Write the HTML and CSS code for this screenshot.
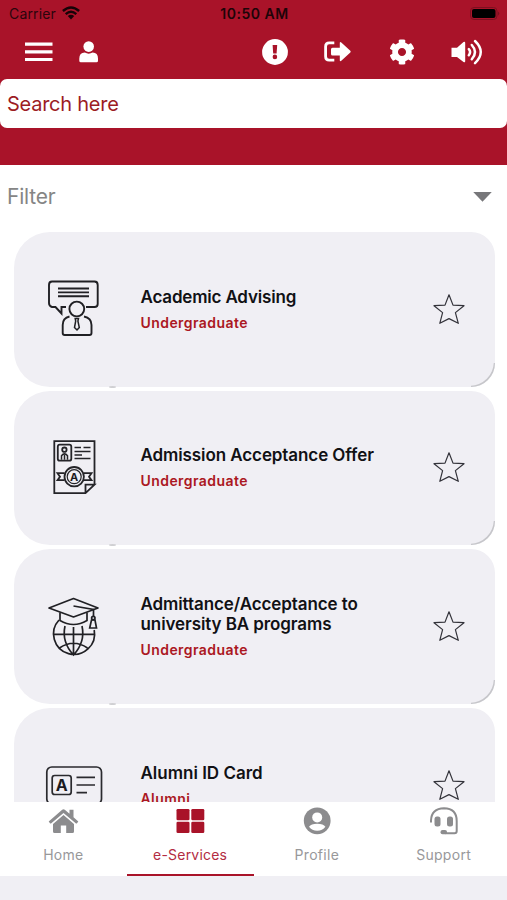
FILE: index.html
```html
<!DOCTYPE html>
<html lang="en">
<head>
<meta charset="utf-8">
<title>e-Services</title>
<link rel="stylesheet" href="styles.css">
</head>
<body>
<svg class="defs" width="0" height="0" aria-hidden="true">
  <symbol id="star" viewBox="0 0 32 32"><path d="M16 1.800 20 12.100 31 12.700 22.400 19.600 25.300 30.300 16 25.600 6.800 30.300 9.600 19.600 1 12.700 12 12.100Z" fill="none" stroke="#33333a" stroke-width="1.200" stroke-linejoin="round"/></symbol>
</svg>
<div class="screen">
  <header class="header">
    <div class="status">
      <div class="carrier"><span>Carrier</span>
        <svg width="18" height="14" viewBox="0 0 18 14" fill="none" stroke="#160307" stroke-width="2.400"><path d="M.9 5Q9-2.200 17.100 5M3.700 8.100Q9 3.500 14.300 8.100"/><path d="M5.800 10.100Q9 7.400 12.200 10.100L9 13.500Z" fill="#160307" stroke="none"/></svg>
      </div>
      <span class="time">10:50 AM</span>
      <svg class="battery" width="30" height="14" viewBox="0 0 30 14"><rect x=".5" y=".5" width="26.500" height="12" rx="3.500" fill="none" stroke="#7d1020"/><rect x="2" y="2" width="23.500" height="9" rx="2" fill="#000"/><path d="M28 4.500Q30.500 6.500 28 8.800Z" fill="#7d1020"/></svg>
    </div>
    <nav class="toolbar">
      <svg class="menu" width="28" height="20" viewBox="0 0 28 20" fill="#fff"><path d="M0 .5h27.500v3.200H0zM0 8.200h27.500v3.200H0zM0 15.900h27.500v3.200H0z"/></svg>
      <svg class="user" width="20" height="22" viewBox="0 0 20 22" fill="#fff"><circle cx="9.700" cy="5.600" r="5.300"/><path d="M.3 19.800V17.500Q.3 11.500 5.800 11.500Q9.700 13.800 13.600 11.500Q19 11.500 19 17.500V19.800Q19 21.300 17.500 21.300H1.800Q.3 21.300.3 19.800Z"/></svg>
      <svg class="alert" width="26" height="26" viewBox="0 0 26 26"><circle cx="13" cy="13" r="12.900" fill="#fff"/><path d="M10.600 6h4.600l-.6 8.600h-3.400Z" fill="#a91329"/><circle cx="12.900" cy="17.900" r="2.300" fill="#a91329"/></svg>
      <svg class="exit" width="28" height="22" viewBox="0 0 28 22"><path d="M10.300 1.900H5.200Q1.600 1.900 1.600 5.500V15.500Q1.600 19.200 5.200 19.200H10.300" fill="none" stroke="#fff" stroke-width="2.800"/><path d="M8.500 6.800H15.800V2Q15.800.2 17.300 1.600L26.300 9.800Q27.200 10.700 26.300 11.500L17.300 19.800Q15.800 21 15.800 19.200V14.400H8.500Q7 14.400 7 12.900V8.300Q7 6.800 8.500 6.800Z" fill="#fff"/></svg>
      <svg class="gear" width="26" height="26" viewBox="0 0 512 512"><path fill="#fff" fill-rule="evenodd" d="M487.400 315.700l-42.600-24.600c4.300-23.200 4.300-47 0-70.200l42.600-24.600c4.900-2.800 7.100-8.600 5.500-14-11.100-35.600-30-67.800-54.700-94.600-3.800-4.100-10-5.100-14.800-2.300L380.800 110c-17.900-15.400-38.500-27.300-60.800-35.100V25.800c0-5.600-3.900-10.500-9.400-11.700-36.700-8.200-74.300-7.800-109.200 0-5.500 1.200-9.400 6.100-9.400 11.700V75c-22.200 7.900-42.800 19.800-60.800 35.100L88.700 85.500c-4.900-2.800-11-1.900-14.800 2.300-24.700 26.700-43.600 58.900-54.700 94.600-1.700 5.400.6 11.200 5.500 14L67.300 221c-4.300 23.200-4.300 47 0 70.200l-42.600 24.600c-4.900 2.800-7.100 8.600-5.500 14 11.100 35.600 30 67.800 54.700 94.600 3.800 4.100 10 5.100 14.800 2.300l42.600-24.600c17.900 15.400 38.500 27.300 60.800 35.100v49.200c0 5.600 3.900 10.500 9.400 11.700 36.700 8.200 74.300 7.800 109.200 0 5.500-1.200 9.400-6.100 9.400-11.700v-49.200c22.200-7.900 42.800-19.800 60.800-35.100l42.600 24.600c4.900 2.800 11 1.900 14.800-2.300 24.700-26.700 43.600-58.900 54.700-94.600 1.500-5.500-.7-11.300-5.600-14.100zM256 336c-44.100 0-80-35.900-80-80s35.900-80 80-80 80 35.900 80 80-35.900 80-80 80z"/></svg>
      <svg class="sound" width="32" height="26" viewBox="0 0 32 26"><path d="M.5 8.700H6L12.500 3Q14.200 2 14.200 4V22.200Q14.200 24 12.500 22.900L6 18H.5Z" fill="#fff"/><path d="M17.800 10.200Q20.400 13 17.800 16.200M20.800 6Q27.200 13 20.800 20.300M24 2Q35.500 13 24 24.200" fill="none" stroke="#fff" stroke-width="2.500" stroke-linecap="round"/></svg>
    </nav>
    <div class="search">Search here</div>
  </header>
  <div class="filter"><span>Filter</span><i class="caret"></i></div>
  <main class="list">
    <article class="card">
      <div class="picture"><svg width="60" height="64" viewBox="44 277 60 64" fill="none" stroke="#202024" stroke-width="1.900"><path d="M66 307H61.500V313.500L55.500 307H52Q49 306 49 303V285Q49 281.500 52 281.500H94.500Q97.700 281.500 97.700 285V304Q97.700 307 94.500 307H86M58 288.500H89M58 292.400H89M58 296.300H89"/><circle cx="76.800" cy="309" r="7.400"/><path d="M69.500 316.500Q62.700 318 62.700 325V333Q62.700 335 64.700 335H89.500Q91.500 335 91.500 333V325Q91.500 318 84 316.500"/><path d="M75.200 318.500H78.500L77.900 321 79.300 327.500 77 330 74.500 327.500 75.700 321Z" stroke-width="1.500"/></svg></div>
      <div class="copy"><h2 class="t1">Academic Advising</h2><p>Undergraduate</p></div>
      <svg class="star" width="32" height="32"><use href="#star"/></svg>
    </article>
    <article class="card">
      <div class="picture"><svg width="60" height="64" viewBox="44 436.300 60 64" fill="none" stroke="#242428" stroke-width="1.800"><path d="M94.500 485V441.500H54.300V493.500H85.500L94.500 485H85.500V493.500"/><rect x="57.800" y="445" width="13.500" height="16" rx="2"/><circle cx="64.400" cy="450" r="2.200"/><path d="M61.500 460V456Q64.500 452 67.500 456V460M64.500 455V460M74.500 447.800H81M83.500 447.800H90.500M74.500 451.800H90.500M74.500 455.300H82M74.500 458.800H90.500" stroke-width="1.500"/><path d="M64.500 473.500H57.500L60 477 57.500 480.500H64.500M84 473.500H91.500L89 477 91.500 480.500H84"/><circle cx="74.200" cy="477" r="9.700"/><circle cx="74.200" cy="477" r="7" stroke-width="1.200"/><text x="74.200" y="481" text-anchor="middle" font-size="11">A</text></svg></div>
      <div class="copy"><h2 class="t2">Admission Acceptance Offer</h2><p>Undergraduate</p></div>
      <svg class="star" width="32" height="32"><use href="#star"/></svg>
    </article>
    <article class="card">
      <div class="picture"><svg width="60" height="64" viewBox="44 595 60 64" fill="none" stroke="#202024" stroke-width="1.700"><path d="M49 608 73.500 598.500 98 608 73.500 617Z" stroke-linejoin="round"/><path d="M60 612.500V620.500Q73.500 628.500 87 620.500V612.500M73.500 606 93.500 609.500V617"/><circle cx="93.300" cy="618" r="1.700"/><path d="M91.500 620H95L96.500 628H89.700Z"/><path d="M59 620A20.500 20.500 0 1 0 94.200 630M52.800 634.300H94.200M73.500 627V655M65 626Q61.500 642 73.500 655Q85.500 642 82 626M59.500 648Q73.500 638.500 87.500 648"/></svg></div>
      <div class="copy"><h2 class="t3">Admittance/Acceptance to university BA programs</h2><p>Undergraduate</p></div>
      <svg class="star" width="32" height="32"><use href="#star"/></svg>
    </article>
    <article class="card">
      <div class="picture"><svg width="60" height="64" viewBox="44 753 60 64" fill="none" stroke="#2a2a2e" stroke-width="1.700"><rect x="46.800" y="767" width="54.700" height="37" rx="5"/><rect x="52.200" y="775.500" width="19" height="19" rx="2.500"/><path d="M76.500 777.300H95M76.500 785H95M76.500 792.700H87"/><text x="61.700" y="790.800" text-anchor="middle" font-size="16">A</text></svg></div>
      <div class="copy"><h2 class="t4">Alumni ID Card</h2><p class="alumni">Alumni</p></div>
      <svg class="star" width="32" height="32"><use href="#star"/></svg>
    </article>
  </main>
  <nav class="tabs">
    <a class="tab"><svg width="32" height="28" viewBox="-.5 0 32 28" fill="#8c8c8e"><path d="M1.200 14.500 14.700 2.700Q16 1.600 17.300 2.700L22 6.800V2.700H26V10.300L30.800 14.500 29.500 16.300Q28.800 16.800 28.200 16.300L16 5.900 3.800 16.300Q3.200 16.800 2.500 16.300Z"/><path d="M5.500 17 16 8 26.500 17V24.500Q26.500 26 25 26H18.700V18.500H13.300V26H7Q5.500 26 5.500 24.500Z"/></svg><span>Home</span></a>
    <a class="tab active"><svg width="32" height="28" viewBox="-.5 0 32 28" fill="#a91329"><rect x="2" y="2" width="13" height="11.300" rx="1.300"/><rect x="16.800" y="2" width="13" height="11.300" rx="1.300"/><rect x="2" y="14.800" width="13" height="11.300" rx="1.300"/><rect x="16.800" y="14.800" width="13" height="11.300" rx="1.300"/></svg><span>e-Services</span></a>
    <a class="tab"><svg width="32" height="28" viewBox="0 0 32 28"><circle cx="16.200" cy="13.800" r="13.400" fill="#8c8c8e"/><circle cx="16.200" cy="10.400" r="5" fill="#fff"/><path d="M8 19.700Q10 16.700 16.200 16.700Q22.400 16.700 24.400 19.700Q21.500 23.700 16.200 23.700Q11 23.700 8 19.700Z" fill="#fff"/></svg><span>Profile</span></a>
    <a class="tab"><svg width="32" height="28" viewBox="0 0 32 28" fill="none" stroke="#8c8c8e" stroke-width="2"><path d="M3 15.500V13.500Q3.500 1.500 16 1.300Q28.700 1.500 28.700 14V24Q28.700 26.300 26.500 26.300H17"/><g fill="#8c8c8e" stroke="none"><rect x="6.500" y="9.500" width="6" height="10" rx="2.500"/><rect x="19" y="9.500" width="6" height="10" rx="2.500"/><rect x="12.500" y="23" width="6.500" height="4.300" rx="2"/></g></svg><span>Support</span></a>
  </nav>
  <footer class="bottom"></footer>
</div>
</body>
</html>
```
FILE: styles.css
```css
* { box-sizing: border-box; }
body { margin: 0; background: #fff; font-family: Inter, "Liberation Sans", sans-serif; }
h2, p { margin: 0; }
svg { display: block; flex: none; }
.defs { position: absolute; }
.screen { width: 507px; height: 900px; display: flex; flex-direction: column; overflow: hidden; }
.header { flex: none; height: 164.500px; background: #a91329; }
.status { height: 28px; padding: 0 7px 1px 9px; display: grid; grid-template-columns: 1fr auto 1fr; align-items: center; color: #2b050c; font-size: 14px; }
.carrier { display: flex; align-items: center; gap: 6px; }
.carrier span { letter-spacing: .15px; }
.carrier svg { margin-top: -2px; }
.time { font-weight: 600; letter-spacing: .5px; color: #1d0408; }
.battery { justify-self: end; margin-top: 1px; }
.toolbar { height: 51px; padding-left: 25px; display: flex; align-items: center; padding-bottom: 3px; }
.user { margin-left: 26px; }
.alert { margin-left: 162.500px; }
.exit { margin-left: 36.500px; }
.gear { margin-left: 36.500px; }
.sound { margin-left: 36.500px; }
.search { height: 49px; background: #fff; border-radius: 7px; padding-left: 7px; line-height: 50px; font-size: 20px; letter-spacing: -.25px; color: #9c1c24; }
.filter { flex: none; height: 67.500px; display: flex; align-items: center; justify-content: space-between; padding: 0 15px 3px 7px; font-size: 21px; letter-spacing: -.2px; color: #858585; }
.caret { width: 19px; height: 10px; background: #77777a; clip-path: polygon(0 0, 100% 0, 50% 100%); }
.list { flex: 1; min-height: 0; overflow: hidden; padding: 0 12px 0 13.500px; display: flex; flex-direction: column; gap: 4.200px; }
.card { position: relative; flex: none; height: 154.500px; display: flex; align-items: center; background: #f0eff4; border-radius: 36px 24px 24px 36px; padding-right: 30px; }
.card::before { content: ""; position: absolute; left: 95px; bottom: -1px; width: 7px; height: 2px; border-radius: 50%; background: #d0d0d3; }
.card::after { content: ""; position: absolute; right: 0; bottom: 0; width: 24px; height: 24px; border-radius: 0 0 24px 0; box-shadow: inset -1.200px -1.200px .5px #c6c6ca; }
.picture { width: 127px; padding-left: 30.500px; }
.copy { flex: 1; }
.copy h2 { font-size: 17px; line-height: 20px; font-weight: 600; letter-spacing: -.09px; color: #111114; white-space: nowrap; width: 240px; }
.copy .t1 { letter-spacing: -.18px; }
.copy .t3 { white-space: normal; }
.copy .t4 { letter-spacing: 0; }
.copy p { margin-top: 7px; font-size: 14px; line-height: 18px; font-weight: 600; letter-spacing: .43px; color: #ab1722; }
.star { margin-top: -1px; }
.picture text { fill: #1b1b1f; stroke: none; font-weight: 700; }
.tabs { flex: none; height: 74px; background: #fff; display: grid; grid-template-columns: repeat(4, 1fr); }
.tab { display: flex; flex-direction: column; align-items: center; padding-top: 5px; border-bottom: 2.500px solid transparent; font-size: 14px; color: #98989a; }
.tab span { margin-top: 11px; line-height: 17px; letter-spacing: .3px; }
.tab.active span { letter-spacing: .2px; }
.active { color: #b32c42; border-color: #a91329; }
.bottom { flex: none; height: 24px; background: #f0eff4; }
```
